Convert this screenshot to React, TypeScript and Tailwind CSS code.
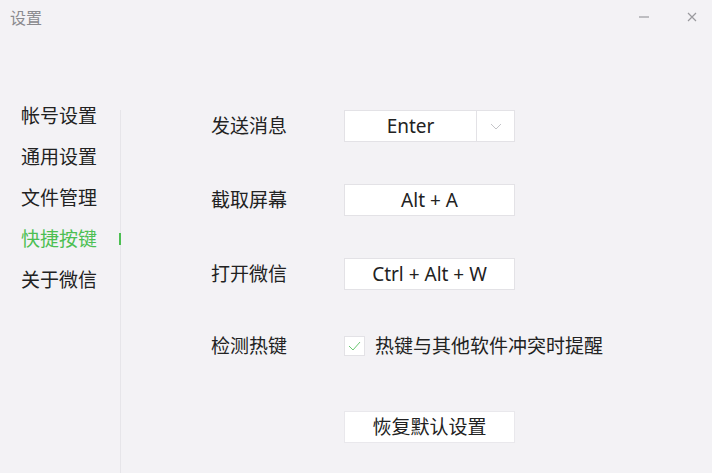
import { useState } from "react";

const navItems = ["帐号设置", "通用设置", "文件管理", "快捷按键", "关于微信"];

function KeyBox({ value, dropdown }: { value: string; dropdown?: boolean }) {
  return (
    <div className="flex h-[32px] w-[171px] items-stretch border border-[#e3e2e6] bg-white">
      <div className="flex flex-1 items-center justify-center text-[19px] text-[#222]">{value}</div>
      {dropdown && (
        <div className="flex w-[38px] items-center justify-center border-l border-[#e3e2e6]">
          <svg width="12" height="7" viewBox="0 0 12 7" fill="none">
            <path d="M1 1l5 5 5-5" stroke="#c4c4c8" strokeWidth="1" />
          </svg>
        </div>
      )}
    </div>
  );
}

export default function App() {
  const [active] = useState(3);
  const [checked] = useState(true);

  return (
    <div
      className="flex h-[473px] w-[712px] flex-col bg-[#f3f2f5] text-[#222]"
      style={{ fontFamily: '"Noto Sans", "Noto Sans CJK SC", sans-serif' }}
    >
      {/* Title bar */}
      <div className="flex h-[40px] items-start justify-between pl-[10px] pr-[14px] pt-[6px]">
        <span className="text-[16px] text-[#8a8a8e]">设置</span>
        <div className="flex items-center gap-[36px] pt-[5px] text-[#9a9a9e]">
          <svg width="12" height="12" viewBox="0 0 12 12">
            <path d="M1 6h10" stroke="currentColor" strokeWidth="1.2" />
          </svg>
          <svg width="12" height="12" viewBox="0 0 12 12">
            <path d="M2 2l8 8M10 2l-8 8" stroke="currentColor" strokeWidth="1.2" />
          </svg>
        </div>
      </div>

      <div className="flex flex-1">
        {/* Sidebar */}
        <nav className="flex w-[120px] flex-col pt-[56px]">
          {navItems.map((item, i) => (
            <div
              key={item}
              className={`relative flex h-[41px] items-center pl-[21px] text-[19px] ${
                i === active ? "text-[#4cbf52]" : "text-[#222]"
              }`}
            >
              {item}
              {i === active && (
                <span className="absolute right-[-1px] top-[14px] h-[12px] w-[2px] bg-[#4cbf52]" />
              )}
            </div>
          ))}
        </nav>
        <div className="mt-[70px] w-px bg-[#e6e5e9]" />

        {/* Content */}
        <div className="flex flex-col pl-[90px] pt-[70px]">
          <div className="flex items-center">
            <span className="w-[133px] text-[19px]">发送消息</span>
            <KeyBox value="Enter" dropdown />
          </div>
          <div className="mt-[42px] flex items-center">
            <span className="w-[133px] text-[19px]">截取屏幕</span>
            <KeyBox value="Alt + A" />
          </div>
          <div className="mt-[42px] flex items-center">
            <span className="w-[133px] text-[19px]">打开微信</span>
            <KeyBox value="Ctrl + Alt + W" />
          </div>
          <div className="mt-[40px] flex h-[32px] items-center">
            <span className="w-[133px] text-[19px]">检测热键</span>
            <span className="flex h-[20px] w-[21px] items-center justify-center border border-[#e3e2e6] bg-white">
              {checked && (
                <svg width="13" height="10" viewBox="0 0 13 10" fill="none">
                  <path d="M1 5l4 4 7-8" stroke="#6cc873" strokeWidth="1" />
                </svg>
              )}
            </span>
            <span className="ml-[10px] text-[19px]">热键与其他软件冲突时提醒</span>
          </div>
          <div className="mt-[49px] flex pl-[133px]">
            <button className="flex h-[32px] w-[171px] items-center justify-center border border-[#e9e8ec] bg-white text-[19px] text-[#222]">
              恢复默认设置
            </button>
          </div>
        </div>
      </div>
    </div>
  );
}
